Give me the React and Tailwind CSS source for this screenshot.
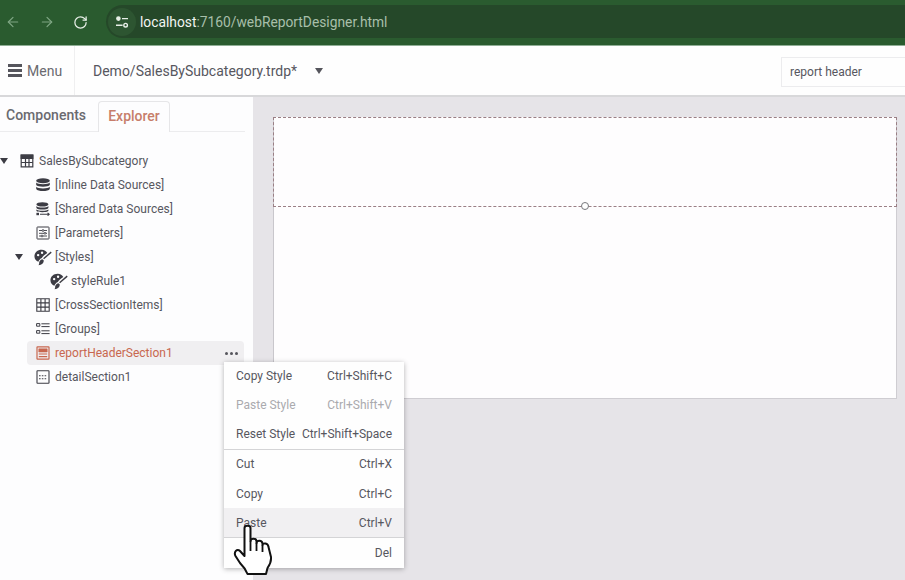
import { ArrowLeft, ArrowRight, RotateCw } from "lucide-react";

const font = { fontFamily: "Roboto, sans-serif" };

const TableIcon = () => (
  <svg width="14" height="14" viewBox="0 0 14 14" fill="none" stroke="#3c3c44" strokeWidth="1.2">
    <path d="M1.2 1.2H12.8V12.8H1.2Z" />
    <path d="M1.2 1.2H12.8V4.5H1.2Z" fill="#3c3c44" />
    <path d="M1.2 8.5H12.8M5.5 4.5V12.8M9 4.5V12.8" />
  </svg>
);

const DbIcon = () => (
  <svg width="14" height="14" viewBox="0 0 14 14" fill="#3c3c44">
    <ellipse cx="7" cy="2.8" rx="6.8" ry="2.5" />
    <path d="M.2 4.6C1.5 6.9 12.5 6.9 13.8 4.6V6.9C12.5 9.2 1.5 9.2.2 6.9Z" />
    <path d="M.2 8.8C1.5 11 12.5 11 13.8 8.8V11C12.5 13.8 1.5 13.8.2 11Z" />
  </svg>
);

const SharedDbIcon = () => (
  <svg width="14" height="14" viewBox="0 0 14 14" fill="#3c3c44">
    <ellipse cx="6.4" cy="2.4" rx="6" ry="2.2" />
    <path d="M.4 4C1.5 6 11.3 6 12.4 4V6C11.3 8 1.5 8 .4 6Z" />
    <path d="M.4 7.5C2 9.3 10.8 9.3 12.4 7.5V9C10.8 10.6 2 10.6.4 9Z" />
    <path d="M4 12.3H13M11.6 10.9L13.2 12.3L11.6 13.7" fill="none" stroke="#3c3c44" strokeWidth="1.1" />
    <path d="M.4 10.8H3V13.2H.4Z" />
  </svg>
);

const ParamsIcon = () => (
  <svg width="14" height="14" viewBox="0 0 14 14" fill="none" stroke="#3c3c44" strokeWidth="1">
    <rect x="1" y="1" width="12" height="12" rx="0.5" />
    <path d="M3 4.5H6M8 4.5H11M3 7.3H8M10 7.3H11M3 10H5M7 10H11" strokeWidth="0.9" />
    <circle cx="7" cy="4.5" r="0.9" strokeWidth="0.9" />
    <circle cx="9" cy="7.3" r="0.9" strokeWidth="0.9" />
    <circle cx="6" cy="10" r="0.9" strokeWidth="0.9" />
  </svg>
);

const PaletteIcon = () => (
  <svg width="18" height="17" viewBox="0 0 16.5 15">
    <path
      fillRule="evenodd"
      fill="#3c3c44"
      d="M7 .4C3.2.4.4 3 .4 6.4c0 2.6 1.6 4.5 3.6 5 .7-1.6 1.8-2.8 3.2-3.4.8-1.5 2.6-3.3 5-4.7C11.4 1.6 9.4.4 7 .4ZM3.8 4.2a1.1 1.1 0 1 1 0 2.2 1.1 1.1 0 0 1 0-2.2ZM7.4 2a1.1 1.1 0 1 1 0 2.2 1.1 1.1 0 0 1 0-2.2Z"
    />
    <path d="M8.8 8.6 15.8 2.6" stroke="#3c3c44" strokeWidth="1.3" fill="none" />
    <path d="M4.8 11.6c.6-1.6 1.8-2.6 3-2.6l1.2 1.2c0 2.2-1.8 4-4.8 4.4.5-.8.6-1.9.6-3Z" fill="#3c3c44" />
  </svg>
);

const GridIcon = () => (
  <svg width="14" height="14" viewBox="0 0 14 14" fill="none" stroke="#3c3c44" strokeWidth="1.1">
    <path d="M.8 .8H13.2V13.2H.8ZM.8 4.9H13.2M.8 9.1H13.2M4.9 .8V13.2M9.1 .8V13.2" />
  </svg>
);

const GroupsIcon = () => (
  <svg width="14" height="14" viewBox="0 0 14 14" fill="none" stroke="#3c3c44" strokeWidth="1">
    <path d="M.6 1.6H3.8V4.2H.6ZM.6 8.6H3.8V11.2H.6Z" />
    <path d="M5.4 1.8H13.6M5.4 4.6H13.6M5.4 8.8H13.6M5.4 11.6H13.6" />
  </svg>
);

const HeaderSectionIcon = () => (
  <svg width="14" height="14" viewBox="0 0 14 14" fill="none" stroke="#c8674f" strokeWidth="1.2">
    <rect x="1" y="0.8" width="12" height="12.4" rx="0.5" />
    <path d="M2.8 2.8H11.2V6H2.8Z" fill="#c8674f" strokeWidth="0.6" />
    <path d="M2.8 8H11.2M2.8 10.6H11.2" />
  </svg>
);

const DetailSectionIcon = () => (
  <svg width="14" height="14" viewBox="0 0 14 14" fill="none" stroke="#3c3c44" strokeWidth="1.1">
    <rect x="1" y="0.8" width="12" height="12.4" rx="0.5" />
    <path d="M3 5.8H11.2M3 8.8H11.2" strokeDasharray="1.6 1.2" />
  </svg>
);

const Caret = () => <div className="w-0 h-0 border-x-[4px] border-x-transparent border-t-[6px] border-t-[#3c3c44]" />;

const Row = ({ pad, caret, icon, label, active }) => (
  <div className="h-6 flex items-center relative">
    {active && (
      <div className="absolute left-[27px] top-0 w-[217px] h-6 rounded-sm bg-[#f0eff1] flex items-center justify-end pr-[6px] gap-[2px]">
        <span className="w-[3px] h-[3px] rounded-full bg-[#55555c]" />
        <span className="w-[3px] h-[3px] rounded-full bg-[#55555c]" />
        <span className="w-[3px] h-[3px] rounded-full bg-[#55555c]" />
      </div>
    )}
    <div className={`${pad} shrink-0 flex items-center justify-start relative`}>
      {caret && <div className={`absolute ${caret}`}><Caret /></div>}
    </div>
    <div className="w-[18px] flex justify-center relative shrink-0">{icon}</div>
    <span className={`relative ml-[3px] text-xs whitespace-nowrap ${active ? "text-[#c8674f]" : "text-[#57575e]"}`}>{label}</span>
  </div>
);

const MenuItem = ({ label, keys, disabled, hover, nudge }) => (
  <div
    className={`h-[29px] flex items-center justify-between px-3 text-xs whitespace-nowrap ${nudge ? "pb-[2px]" : ""} ${
      disabled ? "text-[#aaaaae]" : "text-[#57575e]"
    } ${hover ? "bg-[#f1f0f2]" : ""}`}
  >
    <span>{label}</span>
    <span>{keys}</span>
  </div>
);

export default function App() {
  return (
    <div className="w-[905px] h-[580px] relative overflow-hidden flex flex-col bg-white" style={font}>
      {/* browser chrome */}
      <div className="h-[46px] shrink-0 bg-[#2a5b2f] border-b border-[#8fae95] flex items-center pl-[5px] pb-[2px]">
        <ArrowLeft size={16} strokeWidth={1.8} className="text-[#7fa684] mt-px" />
        <ArrowRight size={16} strokeWidth={1.8} className="text-[#7fa684] ml-[18px] mt-px" />
        <RotateCw size={15} strokeWidth={2} className="text-[#e8efe8] ml-[18px] mt-px" />
        <div className="ml-[18px] flex-1 h-[33px] rounded-l-full bg-[#254829] flex items-center">
          <div className="w-[28px] h-[28px] ml-[2px] rounded-full bg-[#2d5531] flex items-center justify-center">
            <svg width="14" height="14" viewBox="0 0 14 14" fill="none" stroke="#e8efe8" strokeWidth="1.4">
              <circle cx="3.4" cy="3.6" r="1.6" fill="#e8efe8" />
              <path d="M7 3.6H13M1 10.2H7.6" />
              <circle cx="10.6" cy="10.2" r="1.8" />
            </svg>
          </div>
          <span className="ml-[4px] pt-px text-[13.8px] text-[#f2f5f2]">
            localhost<span className="text-[#a8bfaa]">:7160/webReportDesigner.html</span>
          </span>
        </div>
      </div>

      {/* designer toolbar */}
      <div className="h-[51px] shrink-0 bg-[#fefefe] border-b-2 border-[#d8d8da] flex items-center">
        <div className="w-[75px] h-full border-r border-[#efeff0] flex items-center pl-2 text-sm text-[#6a6a70]">
          <div className="w-[14px] flex flex-col gap-[2.5px]">
            <div className="h-[2.5px] bg-[#55555c]" />
            <div className="h-[2.5px] bg-[#55555c]" />
            <div className="h-[2.5px] bg-[#55555c]" />
          </div>
          <span className="ml-[5px]">Menu</span>
        </div>
        <span className="ml-[18px] text-sm text-[#57575e]">Demo/SalesBySubcategory.trdp*</span>
        <div className="ml-[18px] w-0 h-0 border-x-[4px] border-x-transparent border-t-[6px] border-t-[#55555c]" />
        <div className="ml-auto mt-[2px] w-[124px] h-[30px] border border-r-0 border-[#ececee] flex items-center pl-2 text-xs text-[#57575e]">
          report header
        </div>
      </div>

      <div className="flex-1 flex min-h-0">
        {/* left panel */}
        <div className="w-[253px] shrink-0 bg-[#fdfdfe]">
          <div className="h-[35px] w-[245px] border-b border-[#ececee] flex items-end text-sm font-medium">
            <span className="w-[98px] pl-[6px] pb-[2px] h-[30px] flex items-center text-[#6a6a70]">Components</span>
            <span className="w-[72px] h-[31px] pb-[3px] -mb-px flex items-center justify-center text-[#c77d6a] bg-[#fdfdfe] border border-b-0 border-[#e6e6e8] rounded-t-sm">
              Explorer
            </span>
          </div>
          <div className="pt-[17px]">
            <Row pad="w-[18px]" caret="left-0" icon={<TableIcon />} label="SalesBySubcategory" />
            <Row pad="w-[34px]" icon={<DbIcon />} label="[Inline Data Sources]" />
            <Row pad="w-[34px]" icon={<SharedDbIcon />} label="[Shared Data Sources]" />
            <Row pad="w-[34px]" icon={<ParamsIcon />} label="[Parameters]" />
            <Row pad="w-[34px]" caret="left-[15px]" icon={<PaletteIcon />} label="[Styles]" />
            <Row pad="w-[50px]" icon={<PaletteIcon />} label="styleRule1" />
            <Row pad="w-[34px]" icon={<GridIcon />} label="[CrossSectionItems]" />
            <Row pad="w-[34px]" icon={<GroupsIcon />} label="[Groups]" />
            <Row pad="w-[34px]" icon={<HeaderSectionIcon />} label="reportHeaderSection1" active />
            <Row pad="w-[34px]" icon={<DetailSectionIcon />} label="detailSection1" />
          </div>
        </div>

        {/* canvas */}
        <div className="flex-1 bg-[#e6e4e8] pl-5 pt-5">
          <div className="w-[624px] h-[282px] bg-[#fefdfe] border-r border-b border-[#cfcdd2] border-l border-l-[#c9c7cc]">
            <div className="h-[90px] relative border border-dashed border-[#9a7f85] -ml-px -mr-px">
              <div className="absolute left-1/2 -bottom-[4px] -ml-1 w-[8px] h-[8px] rounded-full bg-white border border-[#77777c]" />
            </div>
          </div>
        </div>
      </div>

      {/* context menu */}
      <div className="absolute left-[224px] top-[362px] w-[180px] h-[206px] bg-[#fefefe] shadow-[0_1px_5px_rgba(0,0,0,0.3)]">
        <MenuItem label="Copy Style" keys="Ctrl+Shift+C" nudge />
        <MenuItem label="Paste Style" keys="Ctrl+Shift+V" disabled nudge />
        <MenuItem label="Reset Style" keys="Ctrl+Shift+Space" nudge />
        <div className="border-t border-[#d4d4d6]" />
        <MenuItem label="Cut" keys="Ctrl+X" nudge />
        <MenuItem label="Copy" keys="Ctrl+C" />
        <MenuItem label="Paste" keys="Ctrl+V" hover />
        <div className="border-t border-[#d4d4d6]" />
        <MenuItem label="" keys="Del" />
      </div>

      {/* hand cursor */}
      <svg className="absolute left-[232px] top-[524px]" width="42" height="52" viewBox="0 0 42 52">
        <path
          d="M12.5 4C12.5 1 18.5 1 18.5 4V17C19 14 24 14 24.5 17V19C25 16 30 16 30.5 19.5V21C31 18.5 36 19 36.5 23L39 33C39.5 38 37 42 35.5 44L34 50H15.5C14 46 11 42 8 39L3.5 32C1.5 28 5 24 8 27L12.5 32Z"
          fill="#fff"
          stroke="#111"
          strokeWidth="2"
          strokeLinejoin="round"
        />
        <path d="M18.5 17V27M24.5 19V27M30.5 21V28" stroke="#111" strokeWidth="1.8" fill="none" />
      </svg>
    </div>
  );
}
